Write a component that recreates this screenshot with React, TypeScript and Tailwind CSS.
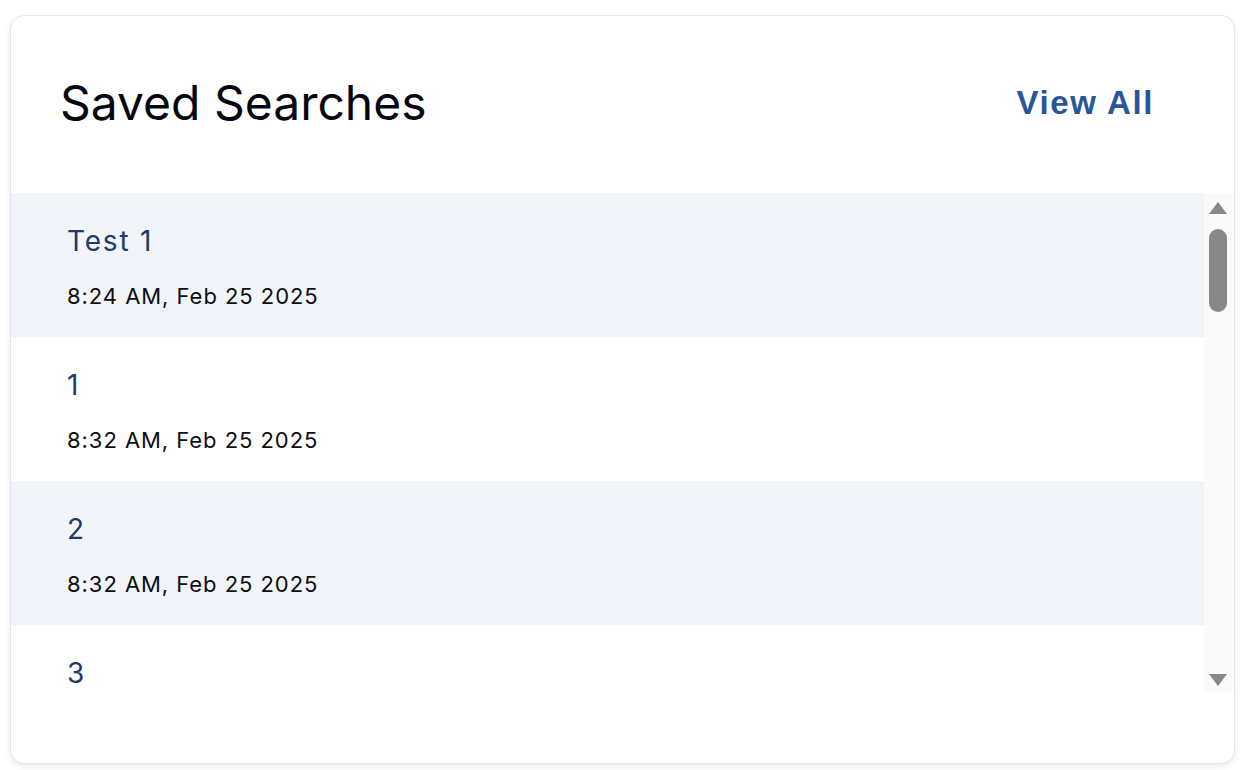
import React from "react";

const rows = [
  { title: "Test 1", date: "8:24 AM, Feb 25 2025" },
  { title: "1", date: "8:32 AM, Feb 25 2025" },
  { title: "2", date: "8:32 AM, Feb 25 2025" },
  { title: "3", date: "8:32 AM, Feb 25 2025" },
];

export default function App() {
  return (
    <div className="w-[1250px] h-[770px] bg-white pl-[10px] pt-[15px]" style={{ fontFamily: "Inter, 'Noto Sans', sans-serif" }}>
      <div className="w-[1225px] h-[749px] rounded-[14px] border border-[#e4e4e8] bg-white shadow-[0_3px_6px_rgba(0,0,0,0.08)] flex flex-col overflow-hidden">
        <div className="h-[177px] shrink-0 flex items-center justify-between pl-[49px] pr-[80px] pb-[4px]">
          <h2 className="text-[48px] leading-none text-[#05060f] font-normal">Saved Searches</h2>
          <a className="text-[33px] leading-none font-bold tracking-[1.6px] text-[#2a5699]" style={{ fontFamily: "'Liberation Sans', Arial, sans-serif" }}>View All</a>
        </div>
        <div className="h-[499px] flex shrink-0">
          <div className="flex-1 overflow-hidden">
            {rows.map((r, i) => (
              <div key={i} className={`h-[144px] pl-[56px] pt-[30px] ${i % 2 === 0 ? "bg-[#f1f4f9]" : "bg-white"}`}>
                <div className="text-[28px] leading-[36px] tracking-[1.8px] text-[#213a6b]">{r.title}</div>
                <div className="mt-[24px] text-[22px] leading-[26px] tracking-[0.95px] text-[#0d0d12]">{r.date}</div>
              </div>
            ))}
          </div>
          <div className="w-[30px] bg-[#fafafa] flex flex-col items-center pt-[9px] pb-[6px]">
            <div className="w-0 h-0 border-l-[9px] border-r-[9px] border-b-[12px] border-l-transparent border-r-transparent border-b-[#888888] ml-[-2px]" />
            <div className="w-[18px] h-[83px] mt-[15px] rounded-full bg-[#888888] ml-[-2px]" />
            <div className="flex-1" />
            <div className="w-0 h-0 border-l-[9px] border-r-[9px] border-t-[12px] border-l-transparent border-r-transparent border-t-[#888888] ml-[-2px]" />
          </div>
        </div>
      </div>
    </div>
  );
}
